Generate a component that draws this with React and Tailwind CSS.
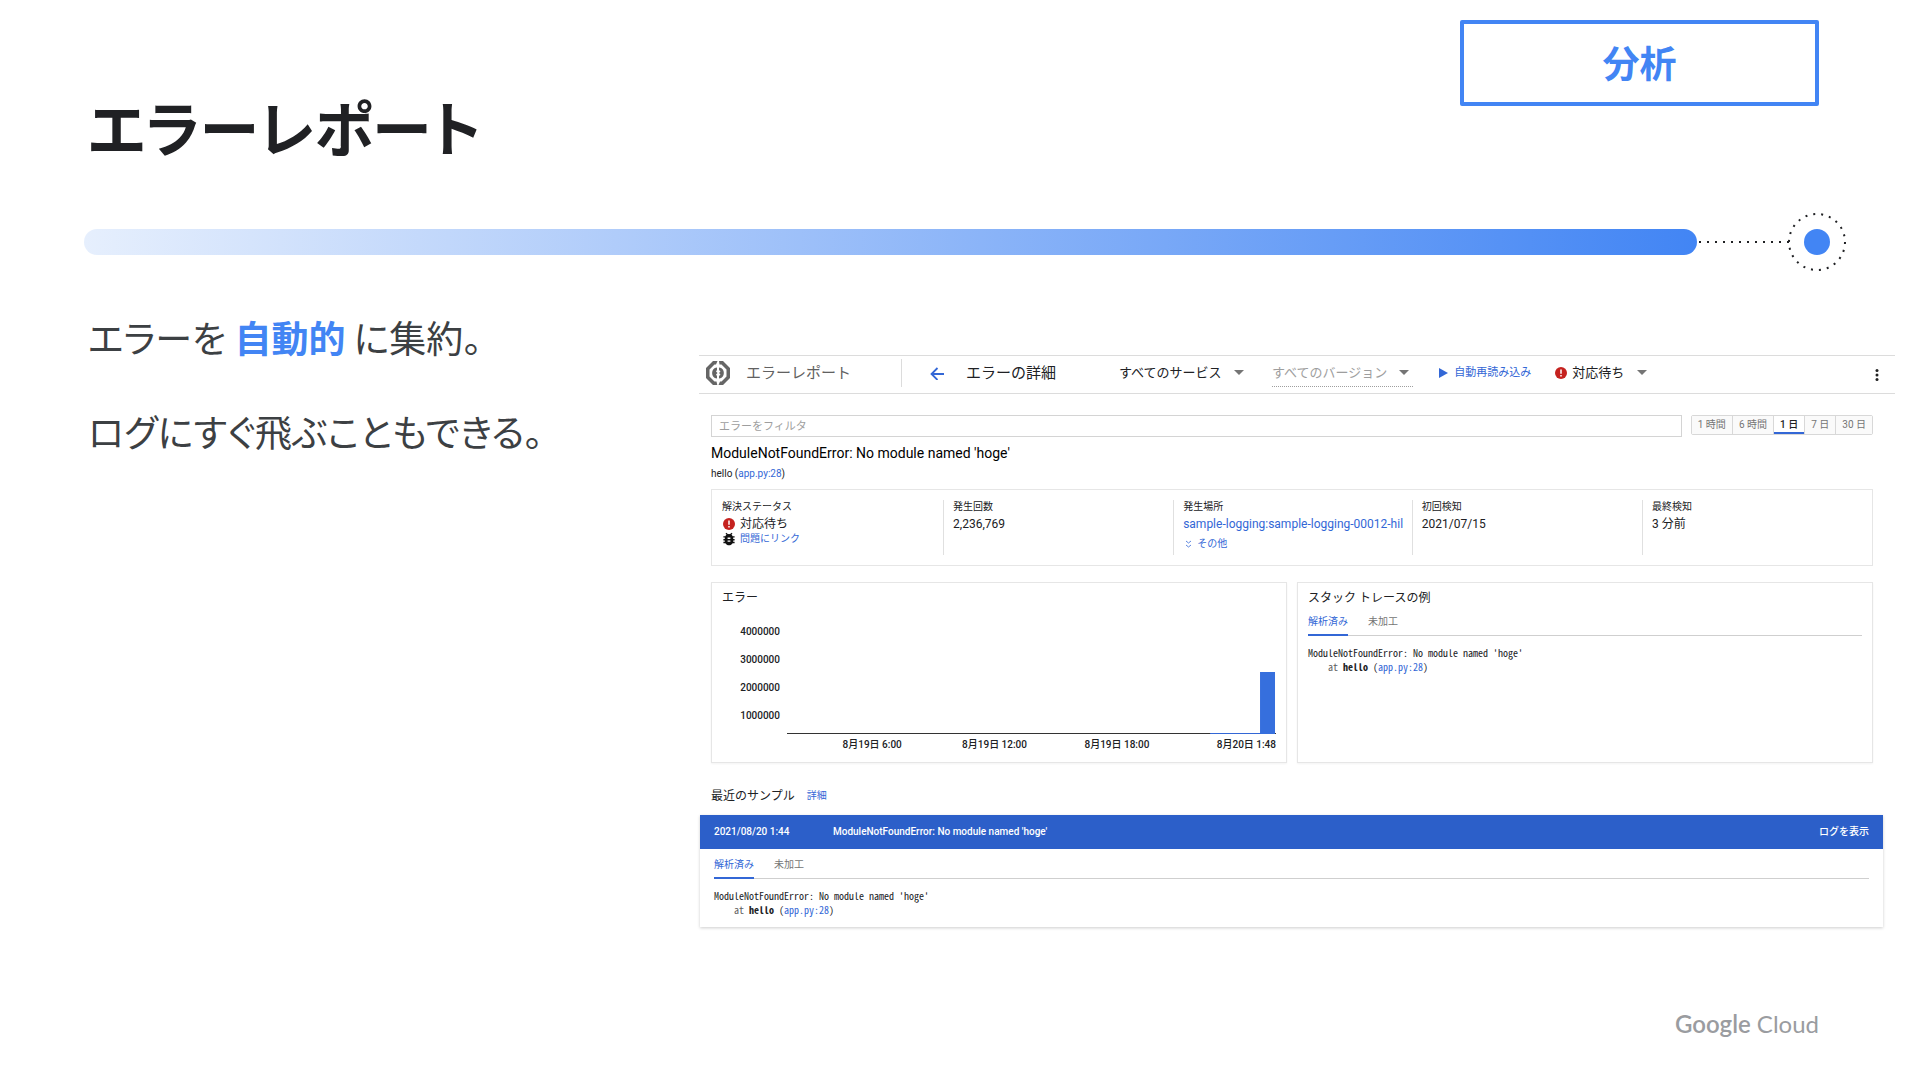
import React from "react";

const LINK = "text-[#3367d6]";

const ranges = ["1 時間", "6 時間", "1 日", "7 日", "30 日"];
const yTicks = ["4000000", "3000000", "2000000", "1000000"];

export default function App() {
  return (
    <div className="flex min-h-screen flex-col bg-white font-['Noto_Sans_CJK_JP',sans-serif] text-[#202124]">
      <header className="flex items-start justify-between pt-5 pr-[89px] pl-[88px]">
        <h1 className="pt-16 text-[60px] leading-[84px] font-bold [font-feature-settings:'palt']">
          エラーレポート
        </h1>
        <div className="flex h-[86px] w-[359px] items-center justify-center rounded-xs border-4 border-[#4285f4] pb-[2px] text-[37px] leading-10 font-bold text-[#4285f4]">
          分析
        </div>
      </header>

      <ProgressLine />

      <main className="flex items-start pt-[38px]">
        <div className="flex w-[699px] shrink-0 flex-col gap-10 pl-[88px] text-[37px] leading-[54px] text-[#3c4043] [font-feature-settings:'palt']">
          <p>
            エラーを <b className="text-[#4285f4]">自動的</b> に集約。
          </p>
          <p>ログにすぐ飛ぶこともできる。</p>
        </div>
        <Console />
      </main>

      <footer className="mt-auto flex justify-end pr-[89px] pb-7 font-['Lato',sans-serif] text-2xl text-[#9a9ca0]">
        <span>
          <span className="font-semibold">Google</span> Cloud
        </span>
      </footer>
    </div>
  );
}

function ProgressLine() {
  return (
    <div className="mt-11 flex items-center pr-[62px] pl-[84px]">
      <div className="h-[26px] flex-1 rounded-full bg-linear-to-r/srgb from-[#e6effd] to-[#4285f4]" />
      <svg className="h-[60px] w-[149px]" viewBox="0 0 149 60" fill="none">
        <path d="M2 30H92" stroke="#202124" strokeWidth="2" strokeDasharray="2 6" />
        <circle cx="120" cy="30" r="28" stroke="#202124" strokeWidth="2" strokeDasharray="2 5.996" />
        <circle cx="120" cy="30" r="13" fill="#4285f4" />
      </svg>
    </div>
  );
}

function Console() {
  return (
    <section className="mt-[45px] mr-[13px] min-w-0 flex-1 font-['Roboto','Noto_Sans_CJK_JP',sans-serif] text-[11px] leading-4">
      <Toolbar />
      <div className="pr-[22px] pl-3">
        <div className="mt-[21px] flex items-start gap-[9px]">
          <input
            aria-label="エラーをフィルタ"
            placeholder="エラーをフィルタ"
            className="h-[22px] min-w-0 flex-1 border border-[#d4d4d4] px-[7px] placeholder:text-[#9e9e9e]"
          />
          <div className="flex h-5 rounded-xs border border-[#d8d8d8] text-[10px] text-[#757575]">
            {ranges.map((r) => (
              <button
                key={r}
                className={
                  r === "1 日"
                    ? "border-r border-[#d8d8d8] px-[6px] font-medium text-[#212121] shadow-[inset_0_-2px_0_#3367d6]"
                    : "border-r border-[#d8d8d8] bg-[#fafafa] px-[6px] last:border-r-0"
                }
              >
                {r}
              </button>
            ))}
          </div>
        </div>
        <h2 className="mt-[6px] text-sm leading-5 text-black">ModuleNotFoundError: No module named 'hoge'</h2>
        <p className="mt-[3px] text-[10px]">
          hello (<a href="#source" className={LINK}>app.py:28</a>)
        </p>
        <Stats />
        <div className="mt-4 grid grid-cols-2 gap-[10px]">
          <ErrorChart />
          <div className="border border-[#e6e6e6] px-[10px] pt-[7px] shadow-xs">
            <h3 className="text-xs leading-4">スタック トレースの例</h3>
            <Trace />
          </div>
        </div>
        <div className="mt-[25px] flex items-center gap-3">
          <h3 className="text-xs leading-4">最近のサンプル</h3>
          <a href="#details" className={`text-[10px] ${LINK}`}>詳細</a>
        </div>
      </div>
      <div className="mt-[11px] mr-3 ml-px pb-[10px] shadow-[0_1px_3px_rgba(0,0,0,0.2)]">
        <div className="flex h-[34px] items-center bg-[#2c5fc9] px-[14px] text-[10px] font-medium text-white">
          <span className="w-[119px]">2021/08/20 1:44</span>
          <span className="flex-1">ModuleNotFoundError: No module named 'hoge'</span>
          <a href="#logs">ログを表示</a>
        </div>
        <div className="px-[14px]">
          <Trace />
        </div>
      </div>
    </section>
  );
}

function Toolbar() {
  return (
    <div className="flex h-[39px] items-center border-y border-[#dcdcdc] pr-3 pb-1 text-[13px]">
      <LogoIcon />
      <span className="ml-4 w-[155px] text-[15px] text-[#616161]">エラーレポート</span>
      <span className="h-7 border-l border-[#dcdcdc]" />
      <button aria-label="戻る" className="ml-7">
        <svg className="h-[14px] w-[14px]" viewBox="0 0 14 14" fill="none" stroke="#3367d6" strokeWidth="1.8">
          <path d="M14 8H1.5M7.5 2L1.5 8l6 6" />
        </svg>
      </button>
      <span className="ml-[22px] w-[153px] text-[15px]">エラーの詳細</span>
      <button className="flex w-[153px] items-center gap-3">
        すべてのサービス <Caret />
      </button>
      <button className="flex items-center gap-3 border-b border-dotted border-[#9e9e9e] pt-[6px] pb-[5px] pr-1 text-[#9e9e9e]">
        すべてのバージョン <Caret />
      </button>
      <button className={`ml-[26px] flex items-center gap-[6px] text-[11px] ${LINK}`}>
        <svg className="h-[10px] w-[9px]" viewBox="0 0 9 10" fill="#3367d6">
          <path d="M0 0L9 5L0 10z" />
        </svg>
        自動再読み込み
      </button>
      <button className="ml-6 flex items-center gap-[5px]">
        <AlertIcon />
        対応待ち <span className="ml-2"><Caret /></span>
      </button>
      <button aria-label="その他の操作" className="mt-1 ml-auto">
        <svg className="h-3 w-3" viewBox="0 0 12 12" fill="#212121">
          <circle cx="6" cy="1.5" r="1.5" />
          <circle cx="6" cy="6" r="1.5" />
          <circle cx="6" cy="10.5" r="1.5" />
        </svg>
      </button>
    </div>
  );
}

function Stats() {
  return (
    <dl className="mt-[7px] flex h-[77px] border border-[#e6e6e6] py-[10px] text-xs">
      <Stat label="解決ステータス" first className="flex-[231]">
        <div className="flex items-center gap-[5px] pl-px">
          <AlertIcon /> 対応待ち
        </div>
        <div className="flex items-center gap-1">
          <BugIcon />
          <a href="#issue" className={`text-[10px] ${LINK}`}>問題にリンク</a>
        </div>
      </Stat>
      <Stat label="発生回数" className="flex-[230]">2,236,769</Stat>
      <Stat label="発生場所" className="flex-[239]">
        <a href="#service" className={LINK}>sample-logging:sample-logging-00012-hil</a>
        <button className={`mt-[5px] flex items-center gap-[5px] pl-[2px] text-[10px] ${LINK}`}>
          <svg className="h-2 w-[7px]" viewBox="0 0 7 8" fill="none" stroke="#3367d6" strokeWidth="0.8">
            <path d="M1 1l2.500 2L6 1M1 5l2.500 2L6 5" />
          </svg>
          その他
        </button>
      </Stat>
      <Stat label="初回検知" className="flex-[230]">2021/07/15</Stat>
      <Stat label="最終検知" className="flex-[230]">3 分前</Stat>
    </dl>
  );
}

function Stat({ label, first, className, children }) {
  return (
    <div className={`${className} min-w-0 whitespace-nowrap ${first ? "pl-[10px]" : "border-l border-[#e0e0e0] pl-[9px]"}`}>
      <dt className="text-[10px] leading-[14px]">{label}</dt>
      <dd className="mt-[2px]">{children}</dd>
    </div>
  );
}

function ErrorChart() {
  return (
    <div className="h-[181px] border border-[#e6e6e6] px-[10px] pt-[7px] shadow-xs">
      <h3 className="text-xs leading-4">エラー</h3>
      <div className="mt-[18px] flex">
        <div className="flex w-[58px] flex-col gap-3 text-right text-[10px] font-medium">
          {yTicks.map((t) => (
            <span key={t}>{t}</span>
          ))}
        </div>
        <svg className="ml-[7px] h-[110px] min-w-0 flex-1" viewBox="0 0 490 110" preserveAspectRatio="none">
          <rect x="0" y="109" width="490" height="1" fill="#333" />
          <rect x="424" y="109" width="50" height="1" fill="#3367d6" />
          <rect x="474" y="48" width="15" height="62" fill="#366fdd" />
        </svg>
      </div>
      <div className="mt-[3px] grid grid-cols-[5fr_5fr_5fr_4fr] pl-[89px] text-center text-[10px] font-medium whitespace-nowrap">
        <span>8月19日 6:00</span>
        <span>8月19日 12:00</span>
        <span>8月19日 18:00</span>
        <span className="text-right">8月20日 1:48</span>
      </div>
    </div>
  );
}

function Trace() {
  return (
    <>
      <div className="mt-2 flex gap-5 border-b border-[#cfcfcf] text-[10px]">
        <button className={`-mb-px border-b-2 border-[#3367d6] pb-1 ${LINK}`}>解析済み</button>
        <button className="pb-[5px] text-[#757575]">未加工</button>
      </div>
      <div className="mt-[10px] font-['Noto_Sans_Mono_CJK_JP','Liberation_Mono',monospace] text-[10px] leading-[14px] whitespace-pre">
        <p>ModuleNotFoundError: No module named 'hoge'</p>
        <p className="flex">
          <span className="text-[#616161]">{"    at "}</span>
          <span className="font-bold">{"hello "}</span>
          <span>(</span>
          <a href="#source" className={LINK}>app.py:28</a>
          <span>)</span>
        </p>
      </div>
    </>
  );
}

function Caret() {
  return (
    <svg className="h-[5px] w-[10px]" viewBox="0 0 10 5" fill="#757575">
      <path d="M0 0h10L5 5z" />
    </svg>
  );
}

function AlertIcon() {
  return (
    <svg className="h-3 w-3" viewBox="0 0 12 12">
      <circle cx="6" cy="6" r="6" fill="#c5221f" />
      <path d="M6 2.500v4.200M6 8v1.600" stroke="#fff" strokeWidth="1.500" />
    </svg>
  );
}

function BugIcon() {
  return (
    <svg className="h-[14px] w-[14px]" viewBox="3 2 18 20" fill="#111">
      <path d="M20 8h-2.810c-.450-.780-1.070-1.450-1.820-1.960L17 4.410 15.590 3l-2.170 2.170C12.960 5.060 12.490 5 12 5s-.960.060-1.410.170L8.410 3 7 4.410l1.620 1.630C7.880 6.550 7.260 7.220 6.810 8H4v2h2.090c-.050.330-.090.660-.090 1v1H4v2h2v1c0 .340.040.670.090 1H4v2h2.810c1.040 1.790 2.970 3 5.190 3s4.150-1.210 5.190-3H20v-2h-2.090c.050-.330.090-.660.090-1v-1h2v-2h-2v-1c0-.340-.040-.670-.090-1H20V8zm-6 8h-4v-2h4v2zm0-4h-4v-2h4v2z" />
    </svg>
  );
}

function LogoIcon() {
  return (
    <svg className="ml-[7px] h-6 w-6" viewBox="0 0 24 24" fill="#666">
      <path d="M7 0h4.500l-1.500 3.500H8.500L3.500 8.500v7L8.500 20.500h2l.8 3.500H7l-7-7V7z" />
      <path d="M13 0h4l7 7v10l-7 7h-4.500l1.500-3.500h1.500l5-5v-7l-5-5h-2z" />
      <path d="M11 6.500v2.500l-1 1.500 1.500 1.500-1.500 1.500 1 1.500v2.500C4.500 17 4.500 7 11 6.500z" />
      <path d="M13 6.500c6.500.5 6.500 10.500 0 11v-2.500l1.500-1.500-1.500-1.500 1.500-1.500L13 9z" />
    </svg>
  );
}
